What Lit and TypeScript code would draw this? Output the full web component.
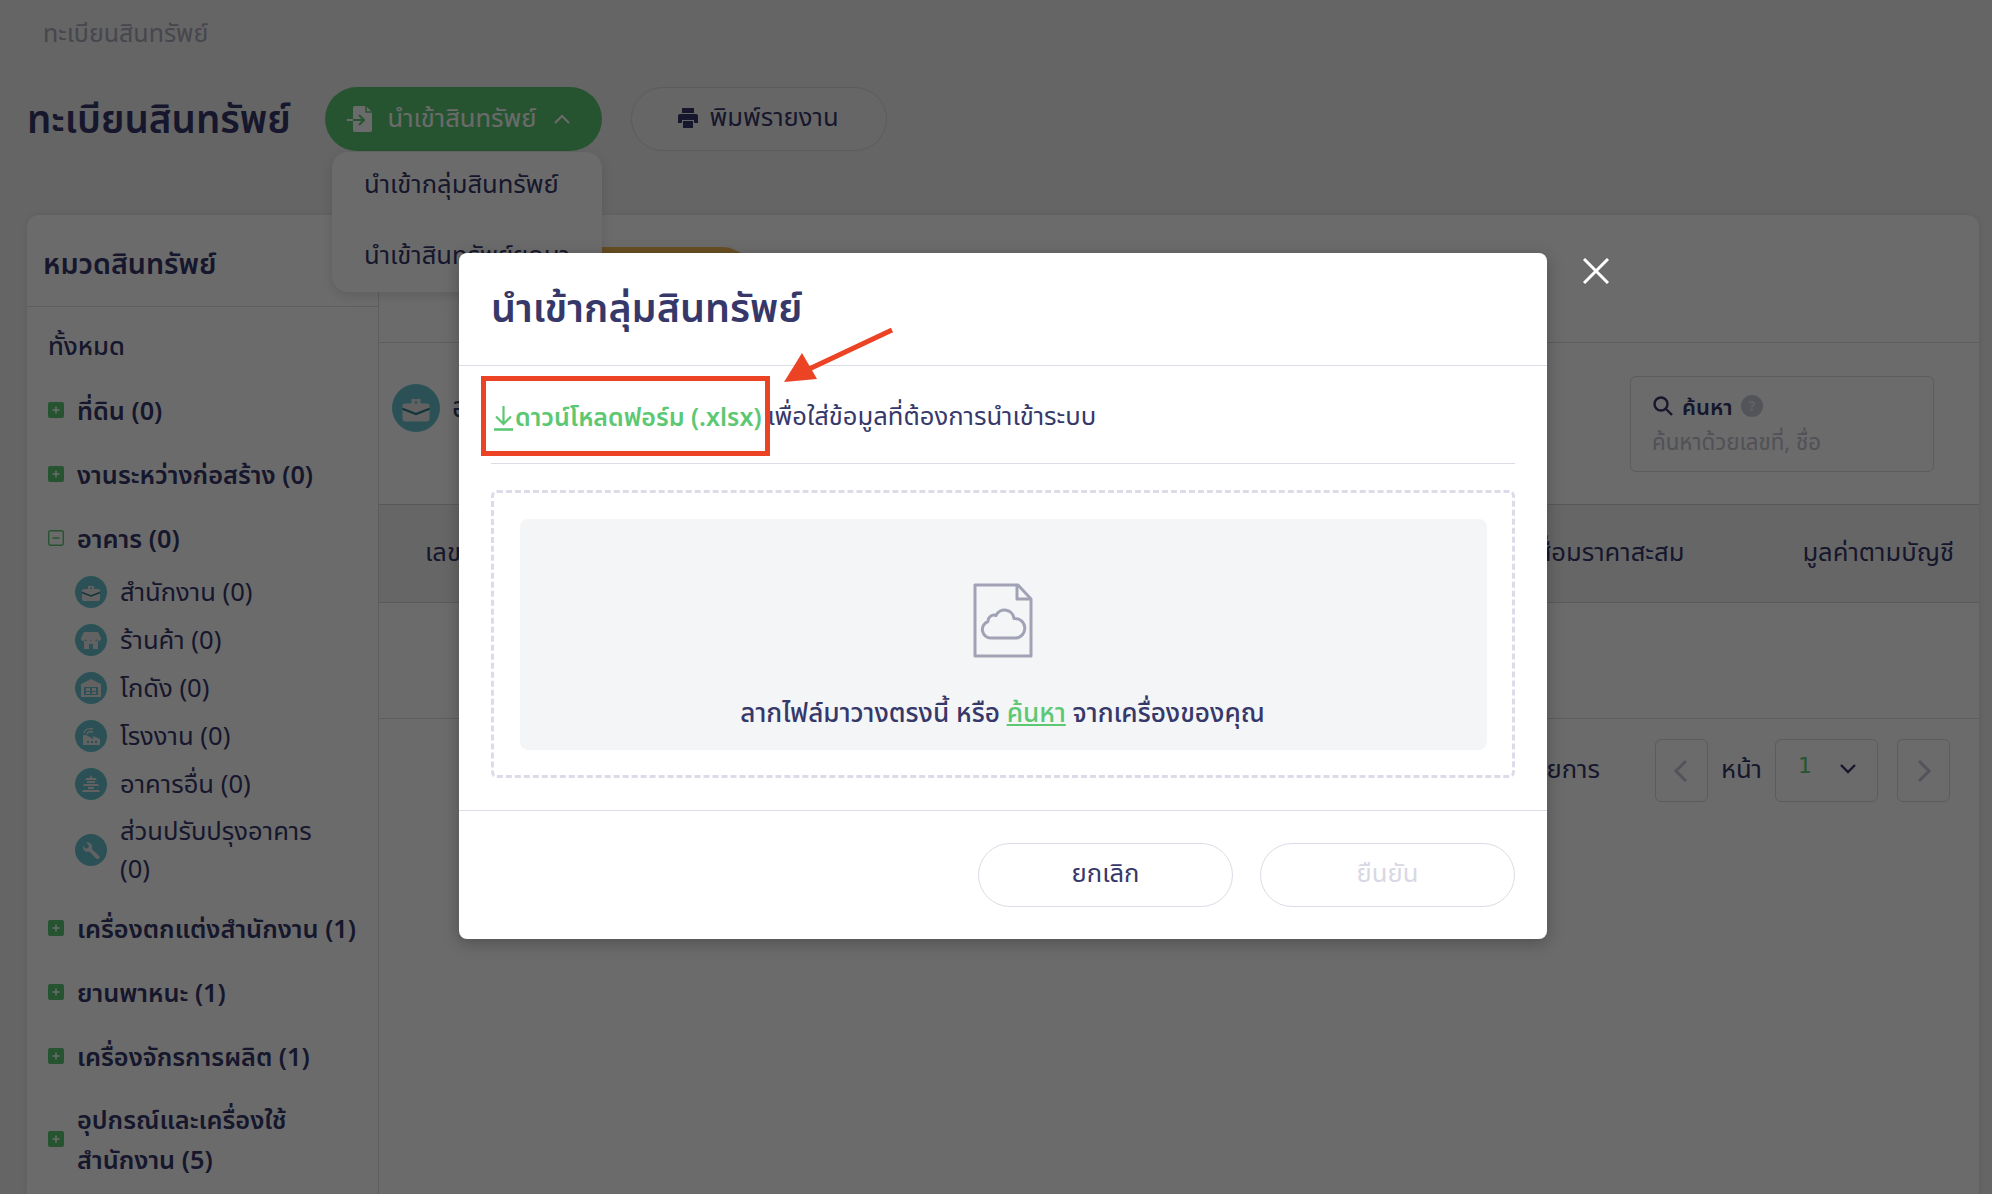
import { LitElement, css, html, svg } from "lit";
import { customElement } from "lit/decorators.js";

const subIcons = {
  case: svg`<path d="M9 13h14a2 2 0 0 1 2 2v8a2 2 0 0 1-2 2H9a2 2 0 0 1-2-2v-8a2 2 0 0 1 2-2Zm4-3h6v3h-2v-1.400h-2V13h-2Z" fill="#e9e9e9"/><path d="M7 16.500 16 20l9-3.500" fill="none" stroke="#2f7c85" stroke-width="1.400"/>`,
  shop: svg`<path d="M9 8h14l3 6a2.500 2.500 0 0 1-5 .8 2.500 2.500 0 0 1-5 0 2.500 2.500 0 0 1-5 0 2.500 2.500 0 0 1-5-.8Zm0 9h14v8h-5v-5h-4v5H9Z" fill="#e9e9e9"/>`,
  store: svg`<path d="M16 7 26 12v13H6V12Zm-7 8v8h14v-8Zm2 1h4v3h-4Zm6 0h4v3h-4Zm-6 4h4v2h-4Zm6 0h4v2h-4Z" fill="#e9e9e9" fill-rule="evenodd"/>`,
  factory: svg`<path d="M8 15h3l7 4v-3l7 3v6H8Zm4 6v2h2v-2Zm4 0v2h2v-2Zm4 0v2h2v-2Z" fill="#e9e9e9" fill-rule="evenodd"/><path d="M9 13c1-4 5-5 9-4M12 14c1-2 3-3 6-2" fill="none" stroke="#e9e9e9" stroke-width="1.400"/>`,
  temple: svg`<path d="M16 7l1.500 3h3L22 12H10l1.500-2h3ZM12 13h8v2h-8Zm-3 3h14l1 2H8Zm4 3h6v2h-6Zm-5 3h16l1 2H7Z" fill="#e9e9e9"/>`,
  wrench: svg`<path d="M8 11.500a5 5 0 0 0 6.500 6L21 24.500a2 2 0 0 0 3-2.800l-7-6.500a5 5 0 0 0-6-6.700l3 3-.8 2.600-2.700.7Z" fill="#e9e9e9"/>`,
};

const subItems = [
  { icon: subIcons.case, label: "สำนักงาน (0)" },
  { icon: subIcons.shop, label: "ร้านค้า (0)" },
  { icon: subIcons.store, label: "โกดัง (0)" },
  { icon: subIcons.factory, label: "โรงงาน (0)" },
  { icon: subIcons.temple, label: "อาคารอื่น (0)" },
  { icon: subIcons.wrench, label: "ส่วนปรับปรุงอาคาร (0)" },
];

@customElement("app-root")
export class AppRoot extends LitElement {
  static styles = css`
    :host {
      display: block;
      width: 1992px;
      height: 1194px;
      overflow: hidden;
      position: relative;
      background: #f0f0f2;
      color: #36386a;
      font-family: "Noto Sans", "Noto Sans Thai", "Liberation Sans", sans-serif;
    }
    .crumb {
      height: 68px;
      padding-left: 43px;
      display: flex;
      align-items: center;
      font-size: 25px;
      color: #a9a9b8;
    }
    .head {
      height: 147px;
      padding: 19px 0 0 27px;
      box-sizing: border-box;
      display: flex;
      align-items: flex-start;
      position: relative;
    }
    .head h1 {
      margin: 0;
      width: 298px;
      height: 64px;
      line-height: 62px;
      font-size: 38.5px;
      font-weight: 600;
    }
    .pill {
      height: 64px;
      box-sizing: border-box;
      border-radius: 32px;
      display: flex;
      align-items: center;
      justify-content: center;
      gap: 10px;
      font-size: 25.6px;
    }
    .pill.green {
      width: 277px;
      padding-right: 10px;
      gap: 15px;
      background: #5dc873;
      color: #fff;
    }
    .pill.outline {
      width: 256px;
      margin-left: 29px;
      padding: 0 2px 2px 0;
      border: 1px solid #d8d8e4;
      background: #f4f4f6;
    }
    .menu {
      position: absolute;
      left: 332px;
      top: 84px;
      width: 270px;
      height: 140px;
      z-index: 2;
      background: #fff;
      border-radius: 16px;
      box-shadow: 0 4px 12px rgba(0, 0, 0, 0.12);
      font-size: 25.6px;
    }
    .menu div {
      height: 71px;
      box-sizing: border-box;
      padding: 0 0 5px 32px;
      display: flex;
      align-items: center;
      white-space: nowrap;
    }
    .card {
      margin-left: 27px;
      width: 1952px;
      height: 979px;
      background: #fff;
      border-radius: 12px 12px 0 0;
      display: flex;
      box-shadow: 0 0 6px rgba(0, 0, 0, 0.08);
    }
    .side {
      width: 352px;
      flex: none;
      box-sizing: border-box;
      border-right: 1px solid #dcdce6;
    }
    .side h2 {
      margin: 0;
      height: 92px;
      box-sizing: border-box;
      padding: 8px 16px 0;
      display: flex;
      align-items: center;
      font-size: 28.6px;
      font-weight: 600;
      border-bottom: 1px solid #dcdce6;
    }
    .all {
      height: 64px;
      margin-top: 6px;
      padding: 4px 0 0 21px;
      box-sizing: border-box;
      display: flex;
      align-items: center;
      font-size: 25.6px;
      font-weight: 500;
    }
    .cat {
      min-height: 64px;
      box-sizing: border-box;
      display: flex;
      align-items: center;
      padding: 12px 0 10px 21px;
      font-size: 25.3px;
      font-weight: 600;
      line-height: 40px;
    }
    .cat span {
      white-space: pre-line;
    }
    .box {
      width: 16px;
      height: 16px;
      flex: none;
      margin-right: 13px;
    }
    .subs {
      margin-top: -1px;
      padding: 0 0 7px 48px;
    }
    .sub {
      min-height: 48px;
      display: flex;
      align-items: center;
      gap: 13px;
      font-size: 25.6px;
      line-height: 38px;
      width: 270px;
    }
    .sub:last-child {
      margin-top: 4px;
    }
    .sub svg {
      width: 32px;
      height: 32px;
      flex: none;
    }
    .main {
      flex: 1;
    }
    .tabs {
      height: 128px;
      box-sizing: border-box;
      padding: 32px 0 0 200px;
      border-bottom: 1px solid #dcdce6;
    }
    .tab {
      width: 175px;
      height: 64px;
      border-radius: 0 32px 32px 0;
      background: #f7bb55;
    }
    .filter {
      height: 161px;
      box-sizing: border-box;
      padding: 33px 45px 0 13px;
      display: flex;
      justify-content: space-between;
      align-items: flex-start;
    }
    .kind {
      display: flex;
      gap: 12px;
      align-items: center;
      margin-top: 8px;
      font-size: 28px;
    }
    .kind svg {
      width: 48px;
      height: 48px;
    }
    .search {
      width: 304px;
      height: 96px;
      box-sizing: border-box;
      padding: 11px 21px;
      border: 1px solid #d8d8e4;
      border-radius: 6px;
      line-height: 36px;
      font-size: 22.3px;
    }
    .search b {
      display: flex;
      align-items: center;
      gap: 8px;
      font-size: 22px;
      font-weight: 600;
    }
    .search span {
      color: #c0c0cc;
    }
    .search svg {
      width: 22px;
      height: 22px;
    }
    .thead {
      height: 99px;
      box-sizing: border-box;
      border-top: 1px solid #d4d4de;
      border-bottom: 1px solid #d4d4de;
      background: #f4f4f6;
      padding: 0 25px 0 46px;
      display: flex;
      align-items: center;
      justify-content: space-between;
      font-size: 25.6px;
    }
    .thead .right {
      display: flex;
      gap: 118px;
    }
    .empty {
      height: 116px;
      box-sizing: border-box;
      border-bottom: 1px solid #dcdce6;
    }
    .pager {
      padding: 20px 29px 0 0;
      display: flex;
      justify-content: flex-end;
      align-items: center;
      font-size: 25.6px;
    }
    .pager .count {
      margin-right: 55px;
    }
    .nav {
      width: 53px;
      height: 63px;
      box-sizing: border-box;
      border: 1px solid #d8d8e4;
      border-radius: 6px;
      display: flex;
      align-items: center;
      justify-content: center;
    }
    .pager .word {
      margin: 0 13px;
    }
    .select {
      width: 103px;
      height: 63px;
      margin-right: 19px;
      box-sizing: border-box;
      border: 1px solid #d8d8e4;
      border-radius: 6px;
      padding: 0 20px 6px 22px;
      display: flex;
      align-items: center;
      justify-content: space-between;
      color: #5dc873;
      font-family: "DejaVu Sans", sans-serif;
      font-size: 22px;
    }
    .select span {
      margin-top: -4px;
    }
    .overlay {
      position: absolute;
      inset: 0;
      z-index: 5;
      background: rgba(0, 0, 0, 0.58);
    }
    .close {
      position: absolute;
      left: 1583px;
      top: 258px;
      width: 26px;
      height: 26px;
      z-index: 6;
    }
    .modal {
      position: absolute;
      left: 459px;
      top: 253px;
      width: 1088px;
      height: 686px;
      z-index: 6;
      background: #fff;
      border-radius: 8px;
      box-shadow: 0 4px 16px rgba(0, 0, 0, 0.25);
    }
    .modal h3 {
      margin: 0;
      height: 113px;
      box-sizing: border-box;
      padding: 2px 32px 0;
      display: flex;
      align-items: center;
      font-size: 39.5px;
      font-weight: 600;
      border-bottom: 1px solid #dcdce6;
    }
    .hint {
      margin: 0 32px;
      height: 98px;
      box-sizing: border-box;
      padding-top: 6px;
      display: flex;
      align-items: center;
      border-bottom: 1px solid #dcdce6;
      font-size: 25.6px;
      white-space: nowrap;
    }
    .dl {
      display: flex;
      align-items: center;
      gap: 2px;
      margin: 0 6px 0 3px;
      color: #5dc873;
      font-size: 25px;
      font-weight: 600;
    }
    .drop {
      margin: 26px 32px 0;
      height: 288px;
      box-sizing: border-box;
      padding: 26px 25px 26px 26px;
      border: 3px dashed #dcdce8;
      border-radius: 6px;
    }
    .zone {
      height: 231px;
      box-sizing: border-box;
      padding: 64px 2px 0 0;
      background: #f4f5f7;
      border-radius: 8px;
      display: flex;
      flex-direction: column;
      align-items: center;
      font-size: 26.2px;
      font-weight: 500;
    }
    .zone p {
      margin: 34px 0 0;
      line-height: 40px;
    }
    .zone u {
      color: #5dc873;
    }
    .foot {
      margin-top: 32px;
      height: 129px;
      box-sizing: border-box;
      border-top: 1px solid #dcdce6;
      padding: 32px 32px 0 0;
      display: flex;
      justify-content: flex-end;
      gap: 27px;
    }
    .foot .pill {
      width: 255px;
      padding-bottom: 2px;
      border: 1px solid #dcdce6;
    }
    .foot .off {
      color: #d8d8e4;
    }
    .mark {
      position: absolute;
      left: 22px;
      top: 123px;
      width: 289px;
      height: 80px;
      box-sizing: border-box;
      border: 5px solid #ec4324;
    }
    .arrow {
      position: absolute;
      left: 320px;
      top: 70px;
      width: 120px;
      height: 70px;
    }
  `;

  private renderBox(open = false) {
    return html`<svg class="box" viewBox="0 0 16 16">
      ${open
        ? svg`<rect x=".7" y=".7" width="14.600" height="14.600" rx="2" fill="none" stroke="#5dc873" stroke-width="1.400"/><path d="M4.500 8h7" stroke="#5dc873" stroke-width="1.500"/>`
        : svg`<rect width="16" height="16" rx="2" fill="#5dc873"/><path d="M8 4.500v7M4.500 8h7" stroke="#fff" stroke-width="1.500"/>`}
    </svg>`;
  }

  private renderCat(label: string, open = false) {
    return html`<div class="cat">${this.renderBox(open)}<span>${label}</span></div>`;
  }

  render() {
    return html`
      <div class="crumb">ทะเบียนสินทรัพย์</div>
      <div class="head">
        <h1>ทะเบียนสินทรัพย์</h1>
        <div class="pill green">
          <svg width="25" height="26" viewBox="0 0 25 26">
            <path d="M8 0h11l6 6v18a2 2 0 0 1-2 2H8a2 2 0 0 1-2-2V2a2 2 0 0 1 2-2Z" fill="#fff"/>
            <path d="M19 0v6h6" fill="none" stroke="#5dc873" stroke-width="1.500"/>
            <path d="M0 14h6" stroke="#fff" stroke-width="2"/>
            <path d="M6 14h11M12 9l5 5-5 5" fill="none" stroke="#5dc873" stroke-width="2"/>
          </svg>
          <span>นำเข้าสินทรัพย์</span>
          <svg width="16" height="10" viewBox="0 0 16 10" style="margin-left:2px"><path d="M1 9l7-7 7 7" fill="none" stroke="#fff" stroke-width="2"/></svg>
        </div>
        <div class="pill outline">
          <svg width="22" height="22" viewBox="0 0 22 22">
            <path d="M5 1h12v5H5ZM3 7h16a2 2 0 0 1 2 2v7h-4v-3H5v3H1V9a2 2 0 0 1 2-2Zm3 7h10v7H6Z" fill="#36386a"/>
          </svg>
          <span>พิมพ์รายงาน</span>
        </div>
        <div class="menu">
          <div>นำเข้ากลุ่มสินทรัพย์</div>
          <div>นำเข้าสินทรัพย์ยกมา</div>
        </div>
      </div>
      <div class="card">
        <aside class="side">
          <h2>หมวดสินทรัพย์</h2>
          <div class="all">ทั้งหมด</div>
          ${this.renderCat("ที่ดิน (0)")}
          ${this.renderCat("งานระหว่างก่อสร้าง (0)")}
          ${this.renderCat("อาคาร (0)", true)}
          <div class="subs">
            ${subItems.map(
              (item) => html`<div class="sub">
                <svg viewBox="0 0 32 32"><circle cx="16" cy="16" r="16" fill="#66c2cf"/>${item.icon}</svg>
                <span>${item.label}</span>
              </div>`,
            )}
          </div>
          ${this.renderCat("เครื่องตกแต่งสำนักงาน (1)")}
          ${this.renderCat("ยานพาหนะ (1)")}
          ${this.renderCat("เครื่องจักรการผลิต (1)")}
          ${this.renderCat("อุปกรณ์และเครื่องใช้\nสำนักงาน (5)")}
        </aside>
        <section class="main">
          <div class="tabs"><div class="tab"></div></div>
          <div class="filter">
            <div class="kind">
              <svg viewBox="0 0 32 32"><circle cx="16" cy="16" r="16" fill="#66c2cf"/>${subIcons.case}</svg>
              <span>อาคาร</span>
            </div>
            <div class="search">
              <b>
                <svg viewBox="0 0 22 22"><circle cx="9" cy="9" r="6.500" fill="none" stroke="#36386a" stroke-width="2.400"/><path d="M14 14l6 6" stroke="#36386a" stroke-width="2.400"/></svg>
                ค้นหา
                <svg viewBox="0 0 22 22"><circle cx="11" cy="11" r="11" fill="#c6c8d4"/><text x="11" y="16" text-anchor="middle" font-size="14" font-weight="700" fill="#e8e8ee">?</text></svg>
              </b>
              <span>ค้นหาด้วยเลขที่, ชื่อ</span>
            </div>
          </div>
          <div class="thead">
            <span>เลขที่</span>
            <div class="right">
              <span>ค่าเสื่อมราคาสะสม</span>
              <span>มูลค่าตามบัญชี</span>
            </div>
          </div>
          <div class="empty"></div>
          <div class="pager">
            <span class="count">ทั้งหมด 0 รายการ</span>
            <div class="nav"><svg width="16" height="24" viewBox="0 0 16 24"><path d="M13 2 3 12l10 10" fill="none" stroke="#c6c8d4" stroke-width="3"/></svg></div>
            <span class="word">หน้า</span>
            <div class="select">
              <span>1</span>
              <svg width="18" height="12" viewBox="0 0 18 12"><path d="M2 3l7 7 7-7" fill="none" stroke="#36386a" stroke-width="2.400"/></svg>
            </div>
            <div class="nav"><svg width="16" height="24" viewBox="0 0 16 24"><path d="M3 2l10 10L3 22" fill="none" stroke="#c6c8d4" stroke-width="3"/></svg></div>
          </div>
        </section>
      </div>
      <div class="overlay"></div>
      <svg class="close" viewBox="0 0 26 26"><path d="M1 1l24 24M25 1 1 25" stroke="#fff" stroke-width="3"/></svg>
      <div class="modal">
        <h3>นำเข้ากลุ่มสินทรัพย์</h3>
        <div class="hint">
          <span class="dl">
            <svg width="19" height="26" viewBox="0 0 19 26"><path d="M9.500 1v18M2 11.500l7.500 7.500 7.500-7.500" fill="none" stroke="#5dc873" stroke-width="2.200"/><path d="M0 24.500h19" stroke="#5dc873" stroke-width="2.600"/></svg>
            ดาวน์โหลดฟอร์ม (.xlsx)
          </span>
          <span>เพื่อใส่ข้อมูลที่ต้องการนำเข้าระบบ</span>
        </div>
        <div class="drop">
          <div class="zone">
            <svg width="60" height="75" viewBox="0 0 60 75" fill="none" stroke="#a2a2b6" stroke-width="3">
              <path d="M2 2h43l13 14v57H2Z" stroke-linejoin="round"/>
              <path d="M44 2v14h14" stroke-linejoin="round"/>
              <path d="M18 55a8.500 8.500 0 0 1-3-16.500 6 6 0 0 1 8-6 9.500 9.500 0 0 1 18 3 8 8 0 0 1 2 19.500Z" stroke-linejoin="round"/>
            </svg>
            <p>ลากไฟล์มาวางตรงนี้ หรือ <u>ค้นหา</u> จากเครื่องของคุณ</p>
          </div>
        </div>
        <div class="foot">
          <div class="pill">ยกเลิก</div>
          <div class="pill off">ยืนยัน</div>
        </div>
        <div class="mark"></div>
        <svg class="arrow" viewBox="0 0 120 70">
          <path d="M113 7 28 47" stroke="#ec4324" stroke-width="5"/>
          <path d="M5 59 23 30 38 56Z" fill="#ec4324"/>
        </svg>
      </div>
    `;
  }
}
